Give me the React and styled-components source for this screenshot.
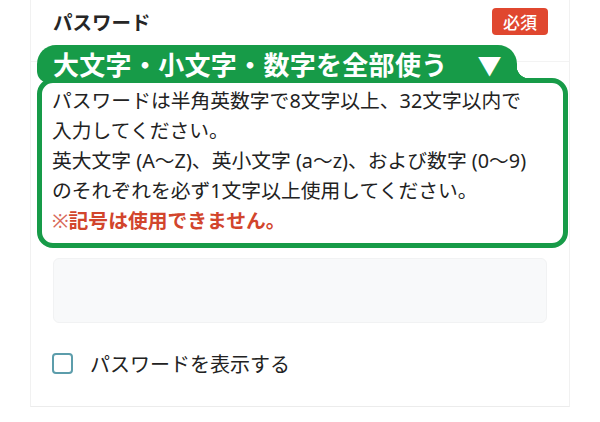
import React from 'react'
import styled, { createGlobalStyle } from 'styled-components'

const GlobalStyle = createGlobalStyle`
    body {
        margin: 0;
        background: #ffffff;
        font-family: "Noto Sans", "Noto Sans CJK JP", sans-serif;
        color: #222222;
    }
`;

const App = () => {
    return (
        <>
            <GlobalStyle />
            <Card>
                <Header>
                    <Label>パスワード</Label>
                    <Badge>必須</Badge>
                </Header>
                <Callout>
                    <Bubble>
                        <span>大文字・小文字・数字を全部使う</span>
                        <Arrow>▼</Arrow>
                    </Bubble>
                    <HintBox>
                        <p>パスワードは半角英数字で8文字以上、32文字以内で<br />入力してください。</p>
                        <p>英大文字 (A〜Z)、英小文字 (a〜z)、および数字 (0〜9)<br />のそれぞれを必ず1文字以上使用してください。</p>
                        <Warning><Mark>※</Mark>記号は使用できません。</Warning>
                    </HintBox>
                </Callout>
                <Field>
                    <Input type="password" />
                </Field>
                <CheckRow>
                    <Check />
                    <CheckLabel>パスワードを表示する</CheckLabel>
                </CheckRow>
            </Card>
        </>
    )
}

export default App;

const Card = styled.div`
    margin-left: 30px;
    width: 538px;
    height: 406px;
    border-left: 1px solid #f1f1f1;
    border-right: 1px solid #f1f1f1;
    border-bottom: 1px solid #ececec;
`;

const Header = styled.div`
    display: flex;
    align-items: flex-start;
    justify-content: space-between;
    height: 62px;
    padding: 8px 21px 0 22px;
    box-sizing: border-box;
    border-bottom: 1px solid #f3f3f3;
`;

const Label = styled.div`
    font-size: 19.5px;
    font-weight: 700;
    line-height: 30px;
    color: #262626;
`;

const Badge = styled.div`
    width: 56px;
    height: 27px;
    display: flex;
    align-items: center;
    justify-content: center;
    background: #e0472f;
    color: #ffffff;
    font-size: 17px;
    font-weight: 500;
    border-radius: 4px;
`;

const Callout = styled.div`
    margin: -17px 1px 0 6px;
    display: flex;
    flex-direction: column;
    align-items: flex-start;
`;

const Bubble = styled.div`
    position: relative;
    z-index: 1;
    display: flex;
    align-items: center;
    height: 38px;
    padding: 0 15px 0 16px;
    background: #179b48;
    color: #ffffff;
    font-size: 26px;
    font-weight: 700;
    letter-spacing: 0.3px;
    border-radius: 19px 19px 0 12px;
    white-space: nowrap;

    &::after {
        content: '';
        position: absolute;
        right: -12px;
        bottom: 5px;
        width: 12px;
        height: 12px;
        background: radial-gradient(circle at 100% 0, transparent 12px, #179b48 12.5px);
    }
`;

const Arrow = styled.span`
    margin-left: 30px;
    font-size: 24px;
`;

const HintBox = styled.div`
    align-self: stretch;
    margin-top: -5px;
    border: 5px solid #179b48;
    border-radius: 16px;
    padding: 3px 8px 7px 10px;
    font-size: 19.8px;
    line-height: 30px;
    color: #222222;

    p {
        margin: 0;
    }
`;

const Warning = styled.p`
    color: #d2452c;
    font-weight: 700;
`;

const Mark = styled.span`
    font-weight: 400;
    color: #d86a5a;
`;

const Field = styled.div`
    padding: 10px 22px 0 22px;
`;

const Input = styled.input`
    display: block;
    width: 100%;
    height: 65px;
    box-sizing: border-box;
    background: #f8f9fa;
    border: 1px solid #f1f2f3;
    border-radius: 6px;
    outline: none;
`;

const CheckRow = styled.label`
    display: flex;
    align-items: center;
    gap: 17px;
    margin-top: 26px;
    padding-left: 21px;
`;

const Check = styled.span`
    width: 21px;
    height: 21px;
    box-sizing: border-box;
    border: 2px solid #5c9dab;
    border-radius: 4px;
    background: #ffffff;
`;

const CheckLabel = styled.span`
    font-size: 20px;
    color: #222222;
`;
